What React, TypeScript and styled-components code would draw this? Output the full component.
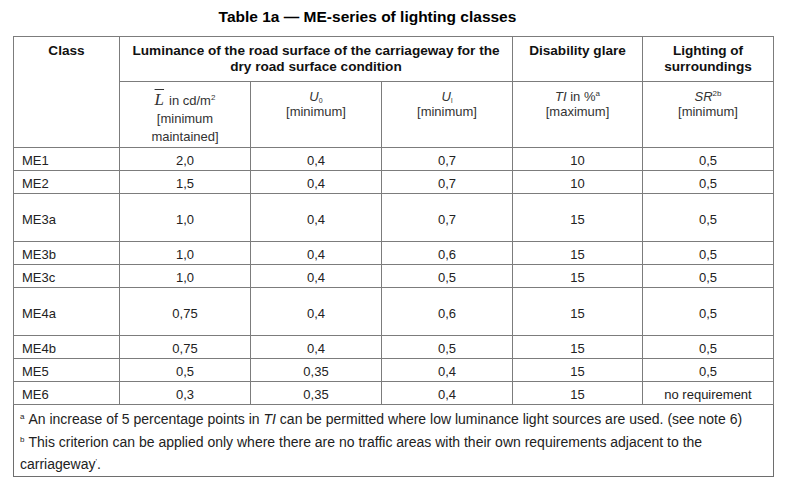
import React from "react";
import styled, { createGlobalStyle } from "styled-components";

const Global = createGlobalStyle`
  html, body { margin: 0; padding: 0; background: #fff; }
  body { font-family: "Liberation Sans", Arial, sans-serif; color: #1e1e1e; }
`;

const Page = styled.div`
  width: 785px;
  height: 483px;
  padding-top: 9px;
  box-sizing: border-box;
  overflow: hidden;
`;

const Title = styled.div`
  font-size: 15.5px;
  font-weight: bold;
  line-height: 16px;
  color: #000;
  text-align: center;
  padding-right: 50px;
  margin-bottom: 11px;
`;

const Table = styled.table`
  margin-left: 13px;
  width: 761px;
  border-collapse: collapse;
  table-layout: fixed;
  font-size: 13px;
  border: 1px solid #6e6e6e;
`;

const HeadCell = styled.th`
  border: 1px solid #7c7c7c;
  font-weight: bold;
  font-size: 13.6px;
  text-align: center;
  vertical-align: top;
  padding: 6px 4px 0;
  line-height: 16px;
  height: 45px;
  box-sizing: border-box;
  color: #111;
`;

const SubHeadCell = styled.td<{ $tallLine?: boolean }>`
  border: 1px solid #7c7c7c;
  text-align: center;
  vertical-align: top;
  padding: ${(p) => (p.$tallLine ? "9px" : "7px")} 4px 0;
  line-height: ${(p) => (p.$tallLine ? 18 : 15)}px;
  height: 66px;
  box-sizing: border-box;
  color: #333;
`;

const Cell = styled.td<{ $left?: boolean; $tall?: boolean }>`
  border: 1px solid #7c7c7c;
  text-align: ${(p) => (p.$left ? "left" : "center")};
  padding: 3px 0 0 ${(p) => (p.$left ? "8px" : "0")};
  vertical-align: middle;
  height: ${(p) => (p.$tall ? 48 : 23)}px;
  box-sizing: border-box;
  line-height: 15px;
  color: #222;
`;

const FootCell = styled.td`
  border: 1px solid #6e6e6e;
  padding: 3px 4px 0 6px;
  font-size: 14px;
  line-height: 22.5px;
  height: 69px;
  box-sizing: border-box;
  vertical-align: top;
  color: #222;
`;

const Note = styled.div``;

const Mark = styled.sup`
  font-size: 8px;
  vertical-align: 5px;
  line-height: 0;
  margin-right: 4px;
`;

const Sup = styled.sup`
  font-size: 8px;
  vertical-align: 5px;
  line-height: 0;
`;

const Sub = styled.sub`
  font-size: 7px;
  vertical-align: -2px;
  line-height: 0;
`;

const Var = styled.i``;

const LBar = styled.span`
  font-family: "Liberation Serif", "Times New Roman", serif;
  font-style: italic;
  font-size: 17px;
  text-decoration: overline;
  margin-right: 5px;
`;

type Row = { c: string; l: string; u0: string; ul: string; ti: string; sr: string; tall?: boolean };

const rows: Row[] = [
  { c: "ME1", l: "2,0", u0: "0,4", ul: "0,7", ti: "10", sr: "0,5" },
  { c: "ME2", l: "1,5", u0: "0,4", ul: "0,7", ti: "10", sr: "0,5" },
  { c: "ME3a", l: "1,0", u0: "0,4", ul: "0,7", ti: "15", sr: "0,5", tall: true },
  { c: "ME3b", l: "1,0", u0: "0,4", ul: "0,6", ti: "15", sr: "0,5" },
  { c: "ME3c", l: "1,0", u0: "0,4", ul: "0,5", ti: "15", sr: "0,5" },
  { c: "ME4a", l: "0,75", u0: "0,4", ul: "0,6", ti: "15", sr: "0,5", tall: true },
  { c: "ME4b", l: "0,75", u0: "0,4", ul: "0,5", ti: "15", sr: "0,5" },
  { c: "ME5", l: "0,5", u0: "0,35", ul: "0,4", ti: "15", sr: "0,5" },
  { c: "ME6", l: "0,3", u0: "0,35", ul: "0,4", ti: "15", sr: "no requirement" },
];

export default function App() {
  return (
    <Page>
      <Global />
      <Title>Table 1a — ME-series of lighting classes</Title>
      <Table>
        <colgroup>
          <col style={{ width: 106 }} />
          <col style={{ width: 131 }} />
          <col style={{ width: 131 }} />
          <col style={{ width: 131 }} />
          <col style={{ width: 130 }} />
          <col style={{ width: 131 }} />
        </colgroup>
        <thead>
          <tr>
            <HeadCell rowSpan={2}>Class</HeadCell>
            <HeadCell colSpan={3}>
              Luminance of the road surface of the carriageway for the
              <br />
              dry road surface condition
            </HeadCell>
            <HeadCell>Disability glare</HeadCell>
            <HeadCell>
              Lighting of
              <br />
              surroundings
            </HeadCell>
          </tr>
          <tr>
            <SubHeadCell $tallLine>
              <LBar>L</LBar>in cd/m<Sup>2</Sup>
              <br />
              [minimum
              <br />
              maintained]
            </SubHeadCell>
            <SubHeadCell>
              <Var>U</Var>
              <Sub>0</Sub>
              <br />
              [minimum]
            </SubHeadCell>
            <SubHeadCell>
              <Var>U</Var>
              <Sub>l</Sub>
              <br />
              [minimum]
            </SubHeadCell>
            <SubHeadCell>
              <Var>TI</Var> in %<Sup>a</Sup>
              <br />
              [maximum]
            </SubHeadCell>
            <SubHeadCell>
              <Var>SR</Var>
              <Sup>2b</Sup>
              <br />
              [minimum]
            </SubHeadCell>
          </tr>
        </thead>
        <tbody>
          {rows.map((r) => (
            <tr key={r.c}>
              <Cell $left $tall={r.tall}>{r.c}</Cell>
              <Cell $tall={r.tall}>{r.l}</Cell>
              <Cell $tall={r.tall}>{r.u0}</Cell>
              <Cell $tall={r.tall}>{r.ul}</Cell>
              <Cell $tall={r.tall}>{r.ti}</Cell>
              <Cell $tall={r.tall}>{r.sr}</Cell>
            </tr>
          ))}
          <tr>
            <FootCell colSpan={6}>
              <Note>
                <Mark>a</Mark>An increase of 5 percentage points in <Var>TI</Var> can be permitted where low
                luminance light sources are used. (see note 6)
              </Note>
              <Note>
                <Mark>b</Mark>This criterion can be applied only where there are no traffic areas with their
                own requirements adjacent to the
                <br />
                carriageway<Sup>'</Sup>.
              </Note>
            </FootCell>
          </tr>
        </tbody>
      </Table>
    </Page>
  );
}
